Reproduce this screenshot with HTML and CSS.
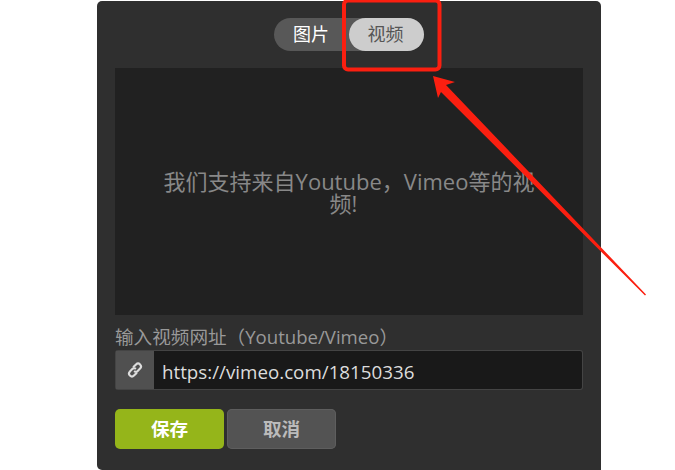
FILE: index.html
```html
<!DOCTYPE html>
<html lang="zh">
<head>
    <meta charset="UTF-8">
    <title>视频</title>
    <link rel="stylesheet" href="styles.css">
</head>
<body>

    <div class="panel">
        <div class="tabs">
            <div class="tab">图片</div>
            <div class="tab active">视频</div>
        </div>

        <div class="preview">
            <p class="preview-text">我们支持来自Youtube，Vimeo等的视频!&nbsp;&nbsp;</p>
        </div>

        <label class="url-label">输入视频网址（Youtube/Vimeo）</label>
        <div class="url-row">
            <div class="url-icon">
                <svg width="18" height="18" viewBox="0 0 16 16" fill="none" stroke="#ddd" stroke-width="1.9" stroke-linecap="round">
                    <path d="M6.8 5.2 L8.9 3.1 a2.5 2.5 0 0 1 3.6 3.6 L10.4 8.8 a2.5 2.5 0 0 1 -2.6 .6"/>
                    <path d="M9.2 10.8 L7.1 12.9 a2.5 2.5 0 0 1 -3.6 -3.6 L5.6 7.2 a2.5 2.5 0 0 1 2.6 -.6"/>
                </svg>
            </div>
            <div class="url-input">https://vimeo.com/18150336</div>
        </div>

        <div class="actions">
            <button class="button save">保存</button>
            <button class="button cancel">取消</button>
        </div>
    </div>

    <!-- red marks drawn on top of the screenshot -->
    <svg class="marks" width="675" height="470" viewBox="0 0 675 470">
        <rect x="344" y="0.5" width="95.5" height="69" rx="4" fill="none" stroke="#fb1f10" stroke-width="4"/>
        <polygon points="433,76 455,82 446,85 646,294.5 645,295.5 441,92 438,98" fill="#fb1f10"/>
    </svg>

</body>
</html>
```

FILE: styles.css
```css
* {
    margin: 0;
    padding: 0;
    box-sizing: border-box;
}
body {
    width: 675px;
    height: 470px;
    overflow: hidden;
    position: relative;
    background-color: #fff;
    font-family: 'Open Sans', 'Noto Sans CJK SC', sans-serif;
    padding: 1px 0 0 97px;
}
.panel {
    width: 504px;
    height: 469px;
    background-color: #2f2f2f;
    border-radius: 5px 5px 0 5px;
    padding: 17px 18px 0;
}
.tabs {
    display: flex;
    width: 150px;
    height: 33px;
    margin: 0 auto 17px;
    background-color: #585858;
    border-radius: 17px;
}
.tab {
    width: 75px;
    color: #fff;
    font-size: 18px;
    line-height: 33px;
    text-align: center;
    padding-right: 1px;
}
.tab.active {
    background-color: #cdcdcd;
    color: #555;
    border-radius: 17px;
    padding-right: 2px;
}
.preview {
    height: 247px;
    background-color: #212121;
    display: flex;
    align-items: center;
    justify-content: center;
    padding: 0 46px;
}
.preview-text {
    color: #888;
    font-size: 22px;
    line-height: 22px;
    text-align: center;
}
.url-label {
    display: block;
    color: #999;
    font-size: 18.6px;
    line-height: 22px;
    margin-top: 11px;
    margin-bottom: 2px;
}
.url-row {
    display: flex;
    height: 40px;
    background-color: #444;
    border-radius: 3px;
    padding: 1px;
}
.url-icon {
    width: 38px;
    display: flex;
    align-items: center;
    justify-content: center;
    background-color: #505050;
}
.url-input {
    flex: 1;
    background-color: #191919;
    color: #ddd;
    font-size: 18.75px;
    line-height: 41px;
    padding-left: 8px;
    border-radius: 0 2px 2px 0;
}
.actions {
    display: flex;
    gap: 3px;
    margin-top: 19px;
}
.button {
    width: 109px;
    height: 40px;
    border: none;
    border-radius: 5px;
    font-family: inherit;
    font-size: 18.6px;
    font-weight: bold;
    padding-bottom: 4px;
}
.button.save {
    background-color: #95b51a;
    color: #fff;
}
.button.cancel {
    background-color: #535353;
    color: #bbb;
    box-shadow: inset 0 0 0 1px #5e5e5e;
}
.marks {
    position: absolute;
    left: 0;
    top: 0;
}
```
